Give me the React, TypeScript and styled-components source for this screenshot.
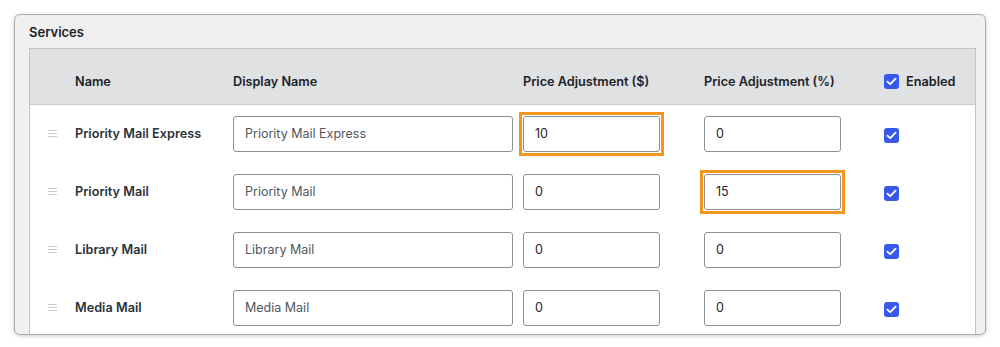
import React from "react";
import styled, { createGlobalStyle, css } from "styled-components";

const GlobalStyle = createGlobalStyle`
  html, body {
    margin: 0;
    padding: 0;
    background: #ffffff;
  }
  body {
    font-family: "Inter", "Noto Sans", sans-serif;
    color: #1d2327;
  }
  * { box-sizing: border-box; }
`;

const Page = styled.div`
  padding: 14px 0 0 14px;
  width: 1000px;
  height: 347px;
  overflow: hidden;
`;

const Window = styled.section`
  width: 972px;
  height: 321px;
  background: #f0f0f1;
  border: 1px solid #a9abae;
  border-radius: 6px;
  box-shadow: 0 1px 4px rgba(0, 0, 0, 0.2);
  padding: 0 9px 0 14px;
  overflow: hidden;
  display: flex;
  flex-direction: column;
`;

const Heading = styled.h2`
  margin: 0;
  padding: 9px 0 8px 0;
  font-size: 13px;
  line-height: 16px;
  font-weight: 600;
  color: #1d2327;
`;

const Table = styled.div`
  flex: 1;
  background: #ffffff;
  border: 1px solid #c3c4c7;
  border-bottom: none;
`;

const gridCols = css`
  display: grid;
  grid-template-columns: 45px 158px 290px 181px 180px 1fr;
  align-items: center;
`;

const HeaderRow = styled.div`
  ${gridCols};
  height: 56px;
  padding-top: 9px;
  background: #dfe1e3;
  border-bottom: 1px solid #c8cbcf;
`;

const HeaderCell = styled.div`
  font-size: 12.7px;
  font-weight: 600;
  color: #1d2327;
  display: flex;
  align-items: center;
  gap: 7px;
  white-space: nowrap;
`;

const Row = styled.div`
  ${gridCols};
  height: 58px;
  padding-bottom: 1px;
`;

const HandleCell = styled.div`
  padding-left: 18px;
  display: flex;
  align-items: center;
`;

const NameCell = styled.div`
  font-size: 12.7px;
  font-weight: 600;
  color: #2c3338;
  white-space: nowrap;
`;

const FieldWrap = styled.span<{ $focused?: boolean }>`
  display: inline-flex;
  ${(p) =>
    p.$focused &&
    css`
      margin: -4px;
      padding: 1px;
      border: 3px solid #f4981d;
    `}
`;

const Field = styled.input<{ $width: number; $muted?: boolean }>`
  width: ${(p) => p.$width}px;
  height: 36px;
  margin: 0;
  padding: 0 11px;
  border: 1px solid #8c8f94;
  border-radius: 3px;
  background: #ffffff;
  font-family: "Inter", "Noto Sans", sans-serif;
  font-size: 12.5px;
  color: ${(p) => (p.$muted ? "#50575e" : "#1d2327")};
  outline: none;
`;

const Check = styled.span`
  width: 15px;
  height: 15px;
  border-radius: 3px;
  background: #3858e9;
  display: inline-flex;
  align-items: center;
  justify-content: center;
  flex: none;
`;

const Handle = () => (
  <svg width="9" height="7" viewBox="0 0 9 7" aria-hidden>
    <g stroke="#c8cacd" strokeWidth="1">
      <line x1="0" y1="0.5" x2="9" y2="0.5" />
      <line x1="0" y1="3.5" x2="9" y2="3.5" />
      <line x1="0" y1="6.5" x2="9" y2="6.5" />
    </g>
  </svg>
);

const CheckBox = () => (
  <Check>
    <svg width="11" height="9" viewBox="0 0 11 9" aria-hidden>
      <path
        d="M1.4 4.6 L4.2 7.2 L9.6 1.6"
        fill="none"
        stroke="#ffffff"
        strokeWidth="1.8"
        strokeLinecap="round"
        strokeLinejoin="round"
      />
    </svg>
  </Check>
);

type Service = {
  name: string;
  amount: string;
  percent: string;
  focus?: "amount" | "percent";
};

const services: Service[] = [
  { name: "Priority Mail Express", amount: "10", percent: "0", focus: "amount" },
  { name: "Priority Mail", amount: "0", percent: "15", focus: "percent" },
  { name: "Library Mail", amount: "0", percent: "0" },
  { name: "Media Mail", amount: "0", percent: "0" },
];

export default function App() {
  return (
    <>
      <GlobalStyle />
      <Page>
        <Window>
          <Heading>Services</Heading>
          <Table>
            <HeaderRow>
              <div />
              <HeaderCell>Name</HeaderCell>
              <HeaderCell>Display Name</HeaderCell>
              <HeaderCell>Price Adjustment ($)</HeaderCell>
              <HeaderCell>Price Adjustment (%)</HeaderCell>
              <HeaderCell>
                <CheckBox />
                Enabled
              </HeaderCell>
            </HeaderRow>
            {services.map((s) => (
              <Row key={s.name}>
                <HandleCell>
                  <Handle />
                </HandleCell>
                <NameCell>{s.name}</NameCell>
                <div>
                  <FieldWrap>
                    <Field $width={280} $muted defaultValue={s.name} readOnly />
                  </FieldWrap>
                </div>
                <div>
                  <FieldWrap $focused={s.focus === "amount"}>
                    <Field $width={137} defaultValue={s.amount} readOnly />
                  </FieldWrap>
                </div>
                <div>
                  <FieldWrap $focused={s.focus === "percent"}>
                    <Field $width={137} defaultValue={s.percent} readOnly />
                  </FieldWrap>
                </div>
                <div>
                  <CheckBox />
                </div>
              </Row>
            ))}
          </Table>
        </Window>
      </Page>
    </>
  );
}
